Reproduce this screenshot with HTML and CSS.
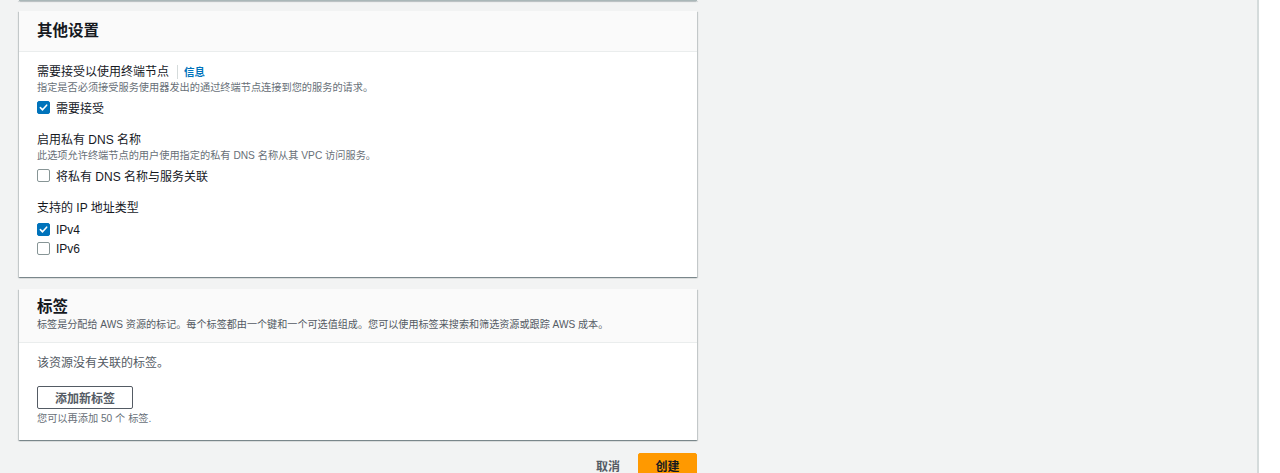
FILE: index.html
```html
<!DOCTYPE html>
<html lang="zh-CN">
<head>
<meta charset="utf-8">
<link rel="stylesheet" href="styles.css">
</head>
<body>
<div class="layout">
  <main class="main">
    <div class="prev-card"></div>

    <section class="card">
      <header class="card-header">
        <h2 class="card-title">其他设置</h2>
      </header>
      <div class="card-body card-body-settings">
        <div class="field">
          <div class="field-label">需要接受以使用终端节点<span class="sep"></span><a class="info">信息</a></div>
          <div class="field-desc">指定是否必须接受服务使用器发出的通过终端节点连接到您的服务的请求。</div>
          <div class="checks">
            <label class="check"><span class="box checked"><svg viewBox="0 0 14 14" width="13" height="13"><path d="M3 7.2 L5.8 10 L11 4" fill="none" stroke="#fff" stroke-width="2" stroke-linecap="round" stroke-linejoin="round"/></svg></span>需要接受</label>
          </div>
        </div>
        <div class="field">
          <div class="field-label">启用私有 DNS 名称</div>
          <div class="field-desc">此选项允许终端节点的用户使用指定的私有 DNS 名称从其 VPC 访问服务。</div>
          <div class="checks">
            <label class="check"><span class="box"></span>将私有 DNS 名称与服务关联</label>
          </div>
        </div>
        <div class="field">
          <div class="field-label">支持的 IP 地址类型</div>
          <div class="checks">
            <label class="check"><span class="box checked"><svg viewBox="0 0 14 14" width="13" height="13"><path d="M3 7.2 L5.8 10 L11 4" fill="none" stroke="#fff" stroke-width="2" stroke-linecap="round" stroke-linejoin="round"/></svg></span>IPv4</label>
            <label class="check"><span class="box"></span>IPv6</label>
          </div>
        </div>
      </div>
    </section>

    <section class="card">
      <header class="card-header card-header-tags">
        <h2 class="card-title">标签</h2>
        <div class="header-desc">标签是分配给 AWS 资源的标记。每个标签都由一个键和一个可选值组成。您可以使用标签来搜索和筛选资源或跟踪 AWS 成本。</div>
      </header>
      <div class="card-body card-body-tags">
        <div class="empty">该资源没有关联的标签。</div>
        <button class="btn-normal">添加新标签</button>
        <div class="hint">您可以再添加 50 个 标签.</div>
      </div>
    </section>

    <div class="actions">
      <button class="btn-link">取消</button>
      <button class="btn-primary">创建</button>
    </div>
  </main>
  <aside class="side"></aside>
</div>
</body>
</html>
```

FILE: styles.css
```css
* { box-sizing: border-box; }
html, body {
  margin: 0;
  padding: 0;
  height: 473px;
  overflow: hidden;
}
body {
  background: #f2f3f3;
  font-family: "Liberation Sans", "Noto Sans CJK SC", sans-serif;
  color: #16191f;
}
.layout {
  display: flex;
  height: 473px;
}
.main {
  width: 1257px;
  padding-left: 19px;
  display: flex;
  flex-direction: column;
  align-items: flex-start;
}
.side {
  flex: 1;
  background: #fff;
  border-left: 2px solid #d5dbdb;
}
.prev-card {
  width: 678px;
  height: 1px;
  background: #fff;
  border-bottom: 1px solid #aab7b8;
  box-shadow: 1px 1px 1px 0 rgba(0,28,36,.15), -1px 1px 1px 0 rgba(0,28,36,.15);
  margin-bottom: 10px;
}
.card {
  width: 678px;
  background: #fff;
  box-shadow: 0 1px 1px 0 rgba(0,28,36,.3), 1px 1px 1px 0 rgba(0,28,36,.15), -1px 1px 1px 0 rgba(0,28,36,.15);
  margin-bottom: 12px;
}
.card-header {
  background: #fafafa;
  border-bottom: 1px solid #eaeded;
  height: 41px;
  padding: 10px 18px 0;
}
.card-header-tags {
  height: 54px;
  padding-top: 8px;
}
.card-title {
  margin: 0;
  font-size: 15.5px;
  line-height: 20px;
  font-weight: 700;
}
.header-desc {
  font-size: 10.1px;
  line-height: 14px;
  color: #545b64;
  margin-top: 1px;
}
.card-body {
  padding: 11px 18px 19px;
}
.field + .field { margin-top: 14px; }
.field-label {
  font-size: 12px;
  line-height: 18px;
  height: 18px;
  display: flex;
  align-items: center;
}
.sep {
  display: inline-block;
  width: 1px;
  height: 14px;
  background: #d5dbdb;
  margin: 0 6px 0 8px;
}
.info {
  color: #0073bb;
  font-weight: 700;
  font-size: 10.5px;
}
.field-desc {
  font-size: 10.2px;
  line-height: 14px;
  height: 14px;
  color: #687078;
}
.checks {
  margin-top: 3px;
  display: flex;
  flex-direction: column;
}
.check {
  display: flex;
  align-items: center;
  height: 19px;
  font-size: 12px;
}
.box {
  width: 13px;
  height: 13px;
  border: 1px solid #879596;
  border-radius: 2px;
  margin-right: 6px;
  display: flex;
  align-items: center;
  justify-content: center;
  background: #fff;
}
.box.checked {
  background: #0073bb;
  border-color: #0073bb;
}
.card-body-tags {
  padding-top: 11px;
  padding-bottom: 13px;
}
.empty {
  font-size: 12px;
  line-height: 18px;
  height: 18px;
  color: #545b64;
}
.btn-normal {
  margin-top: 14px;
  display: block;
  width: 96px;
  height: 23px;
  border: 1px solid #545b64;
  border-radius: 2px;
  background: #fff;
  font-family: inherit;
  font-size: 12px;
  font-weight: 700;
  color: #545b64;
  padding: 0;
}
.hint {
  margin-top: 2px;
  font-size: 10.2px;
  line-height: 16px;
  height: 16px;
  color: #687078;
}
.actions {
  width: 678px;
  display: flex;
  justify-content: flex-end;
  align-items: flex-start;
  margin-top: 1px;
}
.btn-link {
  background: none;
  border: none;
  font-family: inherit;
  font-size: 12px;
  font-weight: 700;
  color: #545b64;
  height: 24px;
  padding: 0;
  margin-right: 18px;
}
.btn-primary {
  background: #ff9900;
  border: 1px solid #ff9900;
  border-radius: 2px;
  width: 59px;
  height: 24px;
  font-family: inherit;
  font-size: 12px;
  font-weight: 700;
  color: #16191f;
  padding: 0;
}
```
